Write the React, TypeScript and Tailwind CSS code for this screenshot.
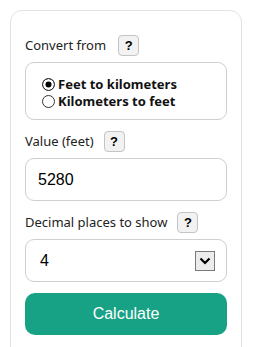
import { useState } from 'react';

function HelpButton() {
    return (
        <button
            type="button"
            className="w-[21px] h-[21px] flex items-center justify-center rounded-[4px] border border-[#c4c4c4] bg-[#f2f2f2] text-[13px] font-bold text-black leading-none"
            style={{ fontFamily: 'Arial, "Liberation Sans", sans-serif' }}
        >
            ?
        </button>
    );
}

function Label({ text, gap }: { text: string; gap: string }) {
    return (
        <div className={`flex items-center h-[21px] ${gap}`}>
            <span className="text-[13px] text-[#222]">{text}</span>
            <HelpButton />
        </div>
    );
}

const radioClass =
    'appearance-none w-[13px] h-[13px] m-0 rounded-full border border-[#333] bg-white checked:bg-black checked:shadow-[inset_0_0_0_2.5px_white]';

export default function App() {
    const [mode, setMode] = useState<'ft' | 'km'>('ft');
    const [value, setValue] = useState('5280');
    const [decimals, setDecimals] = useState('4');

    return (
        <div className="w-[253px] h-[347px] overflow-hidden bg-white" style={{ fontFamily: '"Noto Sans", "Open Sans", sans-serif' }}>
            <div className="ml-[10px] mt-[10px] w-[232px] rounded-t-[12px] border border-[#e3e3e3] px-[14px] pt-[24px] pb-4">
                <Label text="Convert from" gap="gap-[12px]" />

                <div className="mt-[6px] h-[58px] rounded-[9px] border border-[#cfcfcf] pl-[16px] pt-[13px] flex flex-col">
                    <label className="flex items-center h-[17px] gap-[3px] text-[13px] font-bold text-[#111]">
                        <input type="radio" checked={mode === 'ft'} onChange={() => setMode('ft')} className={radioClass} />
                        Feet to kilometers
                    </label>
                    <label className="flex items-center h-[17px] gap-[3px] text-[13px] font-bold text-[#111]">
                        <input type="radio" checked={mode === 'km'} onChange={() => setMode('km')} className={radioClass} />
                        Kilometers to feet
                    </label>
                </div>

                <div className="mt-[11px]">
                    <Label text="Value (feet)" gap="gap-[10px]" />
                </div>
                <input
                    type="text"
                    value={value}
                    onChange={(e) => setValue(e.target.value)}
                    className="mt-[6px] w-full h-[43px] rounded-[9px] border border-[#cfcfcf] px-[12px] text-[16px] text-black outline-none"
                    style={{ fontFamily: '"Liberation Sans", Arial, sans-serif' }}
                />

                <div className="mt-[11px]">
                    <Label text="Decimal places to show" gap="gap-[10px]" />
                </div>
                <div className="relative mt-[6px] h-[43px]">
                    <select
                        value={decimals}
                        onChange={(e) => setDecimals(e.target.value)}
                        className="appearance-none w-full h-full rounded-[9px] border border-[#cfcfcf] bg-white pl-[14px] text-[16px] text-black outline-none"
                        style={{ fontFamily: '"Liberation Sans", Arial, sans-serif' }}
                    >
                        {['0', '1', '2', '3', '4', '5', '6', '7', '8'].map((d) => (
                            <option key={d} value={d}>{d}</option>
                        ))}
                    </select>
                    <div className="pointer-events-none absolute right-[12px] top-[12px] w-[20px] h-[20px] border border-[#7a7a7a] bg-[#ececec] flex items-center justify-center">
                        <svg width="12" height="8" viewBox="0 0 12 8">
                            <path d="M1.5 1.5 L6 6 L10.5 1.5" fill="none" stroke="#000" strokeWidth="2.2" />
                        </svg>
                    </div>
                </div>

                <button
                    type="button"
                    className="mt-[11px] w-full h-[42px] rounded-[10px] bg-[#17a185] text-white text-[16px]"
                    style={{ fontFamily: '"Liberation Sans", Arial, sans-serif' }}
                >
                    Calculate
                </button>
            </div>
        </div>
    );
}
